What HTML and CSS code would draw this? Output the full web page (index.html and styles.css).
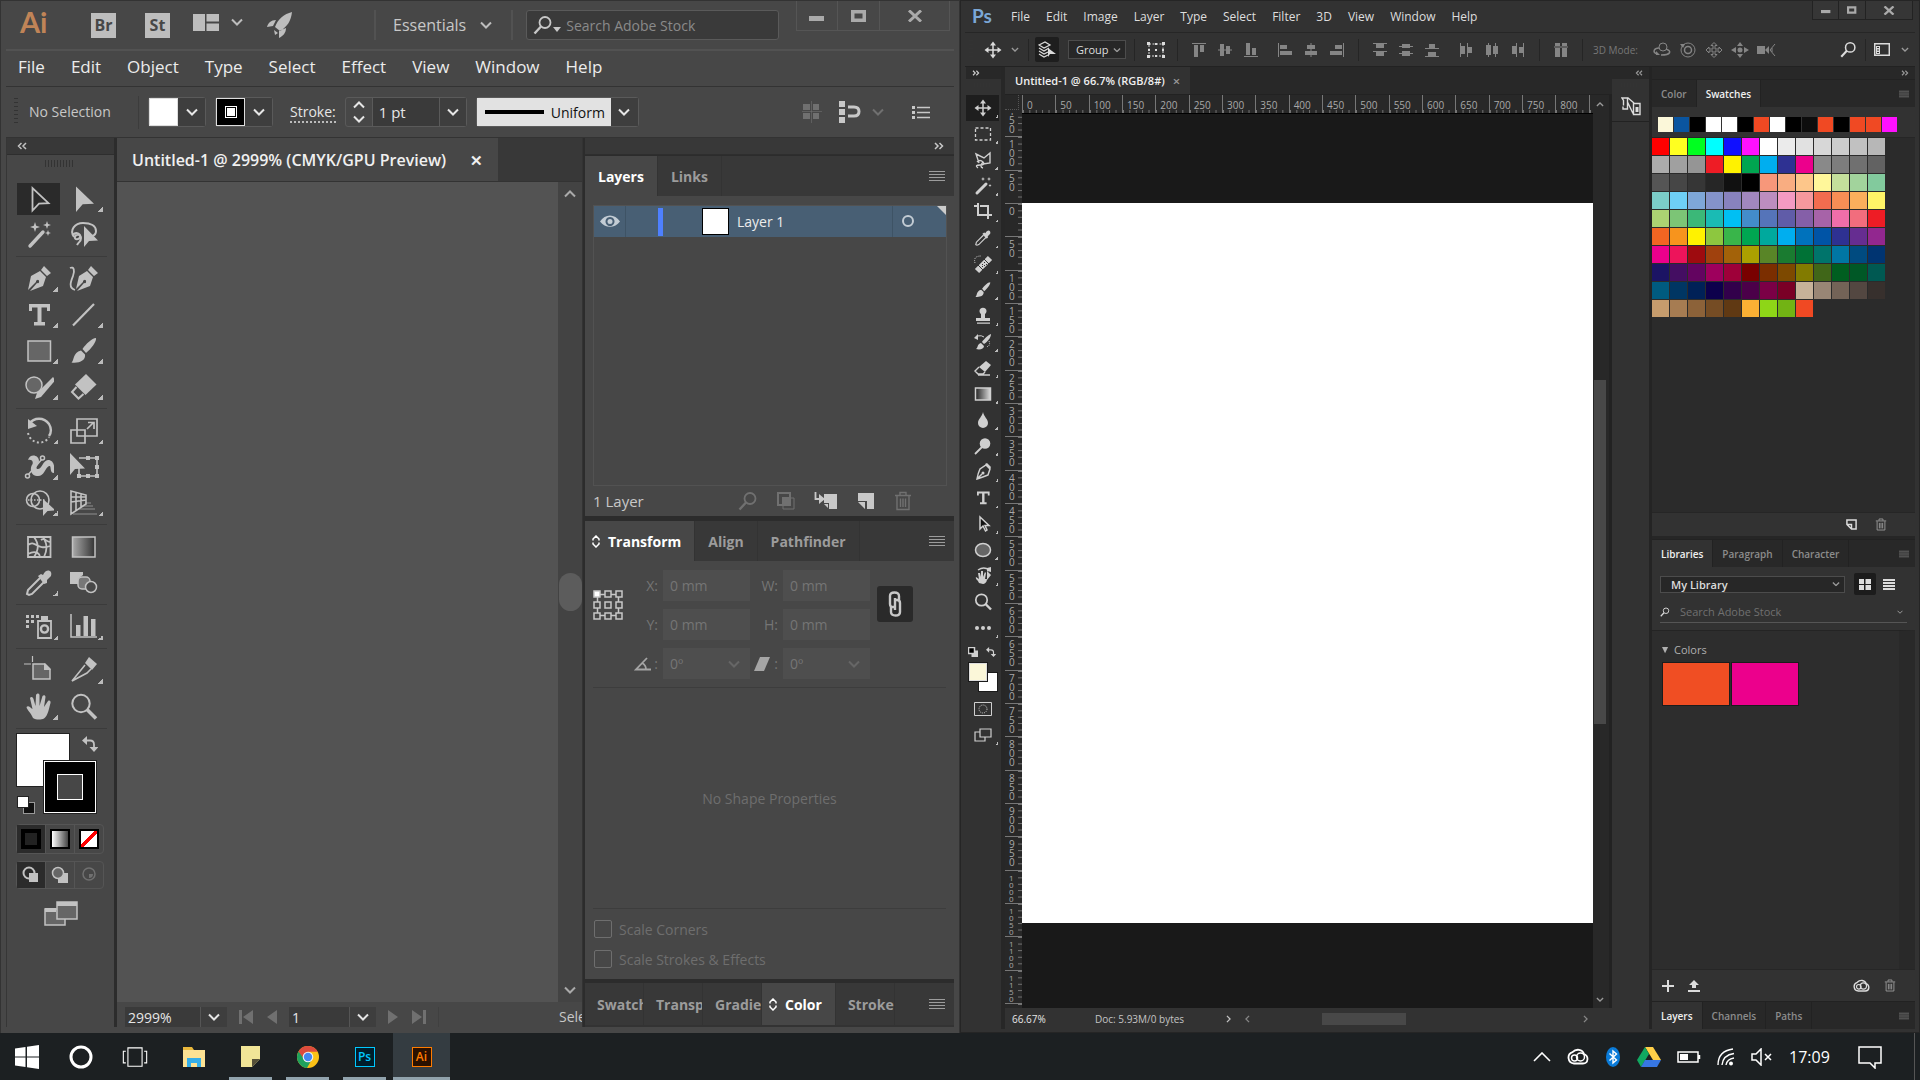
FILE: index.html
```html
<!DOCTYPE html>
<html lang="en">
<head>
<meta charset="utf-8">
<title>Illustrator and Photoshop</title>
<link rel="stylesheet" href="styles.css">
</head>
<body>
<svg class="defs" aria-hidden="true">
  <defs>
    <linearGradient id="fade3"><stop offset="0" stop-color="#222"/><stop offset="1" stop-color="#ddd"/></linearGradient>
    <linearGradient id="fade4"><stop offset="0" stop-color="#aaa"/><stop offset="1" stop-color="#333"/></linearGradient>
  </defs>
  <symbol id="down" viewBox="0 0 12 8"><path class="ln2" d="M1 1.500l5 5 5-5"/></symbol>
  <symbol id="up" viewBox="0 0 12 8"><path class="ln2" d="M1 6.500l5-5 5 5"/></symbol>
  <symbol id="left" viewBox="0 0 8 12"><path class="ln2" d="M6.500 1l-5 5 5 5"/></symbol>
  <symbol id="right" viewBox="0 0 8 12"><path class="ln2" d="M1.500 1l5 5-5 5"/></symbol>
  <symbol id="dleft" viewBox="0 0 10 8"><path class="ln" stroke-width="1.500" d="M4.500 1l-3 3 3 3M9 1L6 4l3 3"/></symbol>
  <symbol id="dright" viewBox="0 0 10 8"><path class="ln" stroke-width="1.500" d="M1 1l3 3-3 3M5.500 1l3 3-3 3"/></symbol>
  <symbol id="menu" viewBox="0 0 16 12"><path class="ln" d="M0 1.500h16M0 4.500h16M0 7.500h16M0 10.500h16"/></symbol>
  <symbol id="updown" viewBox="0 0 8 13"><path class="ln" stroke-width="1.500" d="M1 5.500V4l3-3 3 3v1.500M1 7.500V9l3 3 3-3V7.500"/></symbol>
  <symbol id="loupe" viewBox="0 0 20 20"><circle class="ln" stroke-width="1.800" cx="12" cy="7.500" r="5.500"/><path class="ln" stroke-width="2.400" d="M8 11.500L1.500 18.500"/></symbol>
  <symbol id="win-min" viewBox="0 0 16 12"><path d="M0 6h15v5H0z"/></symbol>
  <symbol id="win-max" viewBox="0 0 16 12"><path fill-rule="evenodd" d="M0 0h15v12H0zM3.500 3.500v5h8v-5z"/></symbol>
  <symbol id="win-x" viewBox="0 0 16 12"><path class="ln" stroke-width="3" d="M2 .5l12 11M14 .5L2 11.500"/></symbol>

  <symbol id="layout" viewBox="0 0 26 17"><path d="M0 0h12v17H0zM13.500 0H26v7.500H13.500zM13.500 9.500H26V17H13.500z"/></symbol>
  <symbol id="rocket" viewBox="0 0 26 26"><path d="M25 0C17 2 11 7 8 15l5 4C20 15 24 9 25 0zM9 8C4 8 1 11 0 15l6-1zM19 16c0 5-3 8-7 10v-7zM7 18l4 3-3 2z"/></symbol>
  <symbol id="pixgrid" viewBox="0 0 20 22"><path d="M1 3h7v6H1zM11 3h6v6h-6zM1 12h7v6H1zM11 12h6v6h-6z"/><path class="ln" stroke-width=".6" d="M9.500 0v22M0 10.500h20"/></symbol>
  <symbol id="magnet" viewBox="0 0 24 22"><path d="M1 0h6v6H1zM1 8h6v6H1zM1 16h6v6H1z"/><path class="ln" stroke-width="3" d="M10 6h6q5 0 5 4.500T16 15h-6"/></symbol>
  <symbol id="list" viewBox="0 0 18 14"><path d="M0 1h3v3H0zM0 6h3v3H0zM0 11h3v3H0z"/><path class="ln" stroke-width="1.500" d="M5 2.500h13M5 7.500h13M5 12.500h13"/></symbol>

  <symbol id="a-select" viewBox="0 0 30 30"><path class="ln" stroke-width="1.800" d="M8.500 4v22.500l6.500-6.800 9.500-.5z"/></symbol>
  <symbol id="a-direct" viewBox="0 0 30 30"><path d="M7 2.500V28l6.700-7.700 11.300-.6z"/></symbol>
  <symbol id="a-wand" viewBox="0 0 30 30"><path class="ln" stroke-width="3.400" stroke-linecap="round" d="M6 26L19 12"/><path d="M11 2l1.200 3.800L16 7l-3.800 1.200L11 12 9.800 8.200 6 7l3.800-1.200zM23 1l1 3 3 1-3 1-1 3-1-3-3-1 3-1zM24 10l.8 2.200L27 13l-2.200.8L24 16l-.8-2.200L21 13l2.200-.8z"/></symbol>
  <symbol id="a-lasso" viewBox="0 0 30 30"><path class="ln" stroke-width="2" d="M5 17c-5-7 1-14 9-14s13 3 13 8q0 4-4 5M4 15c3-4 8-1 7 2s-6 3-5 0 6-3 6 1-2 3-4 7"/><path d="M15 6v21l5-6 9-.5z"/></symbol>
  <symbol id="a-pen" viewBox="0 0 30 30"><path d="M20 2l7 7-4 3-6-6zM16 7l6 6-3 9-13 5 7-8a1.600 1.600 0 1 0-1-1l-8 8 3-14z"/></symbol>
  <symbol id="a-curve" viewBox="0 0 30 30"><path d="M22 2l7 7-4 3-6-6zM18 7l6 6-3 9-13 5 7-8a1.600 1.600 0 1 0-1-1l-7 7 3-13z"/><path class="ln" stroke-width="1.800" d="M1 4c4-2 5 3 3 8s-5 12 2 14"/></symbol>
  <symbol id="a-type" viewBox="0 0 30 30"><path d="M5 4h21v7h-3V7.500h-5.500V22H21v3.500H10V22h3.500V7.500H8V11H5z"/></symbol>
  <symbol id="a-line" viewBox="0 0 30 30"><path class="ln" stroke-width="2.200" d="M4 25.500L25 4"/></symbol>
  <symbol id="a-rect" viewBox="0 0 30 30"><path fill="#666" class="st" d="M4 5h22.500v20H4z"/></symbol>
  <symbol id="a-brush" viewBox="0 0 30 30"><path d="M27 2c1 3-5 11-10 15l-3.500-4C17 8 23 2 27 2zM12 14.500l4 4c1 6-6 9-13.500 8 3-2 1-10 9.500-12z"/></symbol>
  <symbol id="a-shaper" viewBox="0 0 30 30"><circle cx="10" cy="13" r="8" fill="#666" class="st"/><path d="M29 5l2.500 3L17 25l-6 2 2-6z"/></symbol>
  <symbol id="a-eraser" viewBox="0 0 30 30"><path d="M17 2l10.500 10.500L16.500 23 6 12.500z"/><path class="ln" stroke-width="2" d="M7.500 15L3 20l6.500 6.500 5-4.500"/></symbol>
  <symbol id="a-rotate" viewBox="0 0 30 30"><path class="ln" stroke-width="2.400" d="M5 8C10 1 20 1 25 8c3 5 2 9 0 12"/><path class="ln" stroke-width="2" stroke-dasharray="2 2.500" d="M4 17c3 12 17 12 21 4"/><path d="M4 3v10l9-3z"/></symbol>
  <symbol id="a-scale" viewBox="0 0 30 30"><path class="ln" stroke-width="1.700" d="M8 3h20v17H8zM2 14h14v13H2zM18 13l6-6M19 6.500h6V13"/></symbol>
  <symbol id="a-width" viewBox="0 0 30 30"><path d="M4 8c2-7 11-5 11 1 0 4-4 6-2 8 5 1 6-9 11-9 6 0 7 7 6 13-5 0-2-8-5-7-4 2-5 11-12 10S6 16 8 13s0-6-4-5z"/><path class="ln" stroke-width="1.500" d="M3 24L19 6"/><circle class="st" fill="#474747" cx="3.500" cy="24" r="2"/><circle class="st" fill="#474747" cx="18.500" cy="6" r="2"/></symbol>
  <symbol id="a-free" viewBox="0 0 30 30"><path d="M1 1v22l5-6 10-.5z"/><path class="ln" stroke-width="1.600" d="M10 6h18v18H10V14"/><path d="M17 4h4v4h-4zM26 4h4v4h-4zM26 13h4v4h-4zM26 22h4v4h-4zM17 22h4v4h-4zM8 22h4v4H8z"/></symbol>
  <symbol id="a-builder" viewBox="0 0 30 30"><circle class="ln" stroke-width="1.600" cx="16" cy="12" r="9"/><circle class="ln" stroke-width="1.600" cx="9" cy="12" r="6.500"/><path class="ln" stroke-width="1.600" stroke-dasharray="1.500 1.500" d="M4 12h17"/><path d="M19 11v17l4.500-5 8-.5z"/></symbol>
  <symbol id="a-persp" viewBox="0 0 30 30"><path class="ln" stroke-width="1.600" d="M2 3v23l15-10V7zM7 4.500V22M12 6v13M2 14l15-2M2 9l15 0"/><path class="ln" stroke-width="1" opacity=".6" d="M16 15h6M13 18h11M9 21h17M4 26h24"/></symbol>
  <symbol id="a-mesh" viewBox="0 0 30 30"><path class="ln" stroke-width="1.800" d="M4 5h22.500v20H4zM4 13c7-6 9 6 22 1M4 22c9-5 12 1 12 3M10 5c5 7 5 12 0 20M19 5c5 8 4 13 1 20M17 8c4-3 5 2 9 2"/></symbol>
  <symbol id="a-grad" viewBox="0 0 30 30"><path fill="url(#fade4)" class="st" d="M3.500 5H26v20H3.500z"/></symbol>
  <symbol id="a-drop" viewBox="0 0 30 30"><path class="ln" stroke-width="2" d="M16 10L4 22l-1 4 2 1 3-1 12-12"/><path d="M14 8l3-2 2 1c3-7 10-5 8 1l-4 4 0 3-3 1z"/></symbol>
  <symbol id="a-blend" viewBox="0 0 30 30"><path d="M1 4h13v3l-4 3v6H1z"/><rect x="9" y="9" width="12" height="12" rx="4" fill="#777" class="st"/><circle cx="22" cy="19" r="5.500" fill="#474747" class="st"/></symbol>
  <symbol id="a-spray" viewBox="0 0 30 30"><path d="M2 3h3v3H2zM7 3h3v3H7zM12 3h3v3h-3zM2 8h3v3H2zM7 8h3v3H7zM2 13h3v3H2zM17 4h7v5h-7z"/><path class="ln" stroke-width="1.800" d="M14 9h13v17H14z"/><circle class="ln" stroke-width="2.400" cx="20.500" cy="17" r="3.600"/></symbol>
  <symbol id="a-graph" viewBox="0 0 30 30"><path class="ln" stroke-width="1.500" d="M2 2v23h26"/><path d="M7 13h4.500v11H7zM14.500 4H19v20h-4.500zM22 7h4.500v17H22z"/></symbol>
  <symbol id="a-board" viewBox="0 0 30 30"><path class="ln" stroke-width="1.200" d="M0 8h7M8.500 0v6"/><path fill="#666" class="st" d="M9 8h12l5 5v10H9z"/><path d="M20 7v7h7z"/></symbol>
  <symbol id="a-slice" viewBox="0 0 30 30"><path d="M20 1l8 7-5 6-7-7z"/><path class="ln" stroke-width="1.600" d="M16 9L3 25l15-8 4-4"/></symbol>
  <symbol id="a-hand" viewBox="0 0 30 30"><path d="M9 26C7 21 3 18 2.500 15c2-2 4 1 6 2L6 6c1-2 3-1 3.500 1l2 7 .5-11c1-2 3-2 3.500 0v11l3-10c1-1.500 3-1 3 1L20 15l4-6c1.500-1 3 0 2.500 2C25 16 24 24 20 26.500c-3 1.500-8 1.500-11-.5z"/></symbol>
  <symbol id="a-zoom" viewBox="0 0 30 30"><circle class="ln" stroke-width="2" cx="12" cy="11.500" r="8.700"/><path class="ln" stroke-width="3.500" d="M18 17.500l9 9"/></symbol>
  <symbol id="swap" viewBox="0 0 16 16"><path class="ln" stroke-width="1.800" d="M4 4.500h4q4 0 4 4V12"/><path d="M0 4.500L5 0v9zM7.500 11h9L12 16z"/></symbol>
  <symbol id="screens" viewBox="0 0 34 26"><path fill="#666" class="st" d="M1 8h20v16H1z"/><path fill="#666" class="st" d="M13 1h20v17H13z"/><path d="M1 7h11v4H1zM13 1h20v4H13z"/></symbol>
  <symbol id="draw1" viewBox="0 0 18 18"><circle class="ln" stroke-width="2" cx="7" cy="7" r="5.500"/><path d="M7 7h9v9H7z"/></symbol>
  <symbol id="draw2" viewBox="0 0 18 18"><path d="M7 7h10v10H7z"/><circle class="st" fill="#666" cx="7" cy="7" r="5.500"/></symbol>
  <symbol id="draw3" viewBox="0 0 18 18"><circle class="ln" stroke-width="1.500" cx="9" cy="8" r="6"/><path d="M9 8h4q0 4-4 4z"/></symbol>

  <symbol id="eye" viewBox="0 0 20 13"><path fill-rule="evenodd" d="M0 6.500C5-1.500 15-1.500 20 6.500 15 13.500 5 13.500 0 6.500zM10 2a4.500 4.500 0 1 0 .01 0z"/><circle cx="10" cy="6.500" r="2.500"/></symbol>
  <symbol id="clipmask" viewBox="0 0 18 18"><path class="ln" stroke-width="2" d="M1 1h12v12H1z"/><path class="ln" d="M6 6h11v11H6z"/><path d="M5 5h8v8H5z"/></symbol>
  <symbol id="sublayer" viewBox="0 0 24 18"><path fill-rule="evenodd" d="M10 2h13v15h-8V11h-5zM10 12h4v4z"/><path class="ln" stroke-width="1.800" d="M1.500 0v7h5"/><path d="M5 2l6 5-6 5z"/></symbol>
  <symbol id="newlayer" viewBox="0 0 18 18"><path d="M1 1h16v16h-7V9H1zM1 10h7v7z"/></symbol>
  <symbol id="bin" viewBox="0 0 18 20"><path class="ln" stroke-width="1.400" d="M1 4.500h16M6 4V1.500h6V4M3 5v13.500h12V5M6.500 7.500V16M9 7.500V16M11.500 7.500V16"/></symbol>
  <symbol id="refgrid" viewBox="0 0 30 30"><path class="ln" stroke-width="1.500" d="M4.500 4.500h21v21h-21z"/><g class="st" fill="#474747"><path fill="#fff" d="M1 1h6v6H1z"/><path d="M12 1h6v6h-6zM23 1h6v6h-6zM1 12h6v6H1zM12 12h6v6h-6zM23 12h6v6h-6zM1 23h6v6H1zM12 23h6v6h-6zM23 23h6v6h-6z"/></g></symbol>
  <symbol id="chain" viewBox="0 0 14 26"><path class="ln" stroke-width="2.400" d="M6 16H5q-3 0-3-3V5q0-3.500 4.500-3.500T11 5v5M8 9h1q3 0 3 3v9q0 3.500-4.500 3.500T3 21v-5M7 7v12"/></symbol>
  <symbol id="angle" viewBox="0 0 18 14"><path class="ln" stroke-width="1.800" d="M13 1L2 12.500h15M8 6q4 2 4 6.500"/></symbol>
  <symbol id="shear" viewBox="0 0 18 14"><path d="M6 0h10l-6 14H0z"/></symbol>
  <symbol id="first" viewBox="0 0 14 14"><path d="M0 0h3v14H0zM14 0v14L4 7z"/></symbol>
  <symbol id="prev" viewBox="0 0 10 14"><path d="M10 0v14L0 7z"/></symbol>
  <symbol id="next" viewBox="0 0 10 14"><path d="M0 0v14l10-7z"/></symbol>
  <symbol id="last" viewBox="0 0 14 14"><path d="M11 0h3v14h-3zM0 0v14l10-7z"/></symbol>

  <symbol id="p-move" viewBox="0 0 20 20"><path class="ln" stroke-width="1.500" d="M10 3v14M3 10h14"/><path d="M10 1.500L13 5.500H7zM10 18.500L7 14.500h6zM1.500 10L5.500 7v6zM18.500 10L14.500 13V7z"/></symbol>
  <symbol id="p-marq" viewBox="0 0 20 20"><path class="ln" stroke-width="1.300" stroke-dasharray="3 2" d="M2.500 4h15v12h-15z"/></symbol>
  <symbol id="p-lasso" viewBox="0 0 20 20"><path class="ln" stroke-width="1.400" d="M6 13L3 4l8 4 6-5v10l-7 1M4 12q3-3 6 0t-3 3-2 3M10 12q-4 5 0 6"/></symbol>
  <symbol id="p-wand" viewBox="0 0 20 20"><path class="ln" stroke-width="3" stroke-linecap="round" d="M4 17l9-9"/><path d="M10 1l.6 1.400L12 3l-1.400.6L10 5l-.6-1.400L8 3l1.400-.6zM16 1l.6 1.400L18 3l-1.400.6L16 5l-.6-1.400L14 3l1.400-.6zM17 8l.5 1 1 .5-1 .5-.5 1-.5-1-1-.5 1-.5z"/></symbol>
  <symbol id="p-crop" viewBox="0 0 20 20"><path class="ln" stroke-width="2" d="M5 1v12h9M1 4h3M7 4h8v13M16 13h3"/></symbol>
  <symbol id="p-heal" viewBox="0 0 20 20"><path class="ln" stroke-width="6" d="M4 17L17 4"/><path stroke="#333" stroke-width="1" fill="none" d="M5 11l5 5M11 5l5 5"/><path fill="#333" d="M9 10h1v1H9zM11 8h1v1h-1zM11 11h1v1h-1zM9 12h1v1H9zM13 10h1v1h-1z"/><path class="ln" stroke-dasharray="1 1" d="M2 9Q0 2 8 2"/></symbol>
  <symbol id="p-stamp" viewBox="0 0 20 20"><path d="M8 8a3.500 3.500 0 1 1 4 0v4h5v3H3v-3h5zM4 16.500h13v1.200H4z"/></symbol>
  <symbol id="p-hist" viewBox="0 0 20 20"><path d="M18 2c0 4-4 8-7 10L9 10c2-3 6-7 9-8zM8 11l3 3c0 3-4 4-8 3 2-1 1-5 5-6zM1 6l4-4v6z"/><path class="ln" d="M4 4q5-1 7 1"/><path class="ln" stroke-dasharray="1 1" d="M16 9q2 5-3 6"/></symbol>
  <symbol id="p-eraser" viewBox="0 0 20 20"><path d="M13 3l5 4-6 7-6-5z"/><path class="ln" stroke-width="1.400" d="M6 9l-4 4 3 3h5l2-2M5 17h12"/></symbol>
  <symbol id="p-grad" viewBox="0 0 20 20"><path fill="url(#fade3)" class="st" d="M2.500 4h15v12h-15z"/></symbol>
  <symbol id="p-blur" viewBox="0 0 20 20"><path d="M10 2c1 5 5 7 5 11a5 5 0 0 1-10 0c0-4 4-6 5-11z"/></symbol>
  <symbol id="p-dodge" viewBox="0 0 20 20"><circle cx="12" cy="7.500" r="5.300"/><path class="ln" stroke-width="1.800" d="M9 11l-7 7"/></symbol>
  <symbol id="p-pen" viewBox="0 0 20 20"><path class="ln" stroke-width="1.500" d="M13 3l4 4-2 6q-5 2-11 4 1-6 3-10zM4 17l5-5"/><circle cx="10" cy="11" r="1.500"/><path d="M12 2l2-1 4 4-1 2z"/></symbol>
  <symbol id="p-path" viewBox="0 0 20 20"><path fill="#111" class="st" stroke-width="1.200" d="M7 3v12l3-3 2.500 5 1.500-1-2-4.500h4z"/></symbol>
  <symbol id="p-oval" viewBox="0 0 20 20"><ellipse fill="#666" class="st" cx="10" cy="10" rx="7.500" ry="6.500"/></symbol>
  <symbol id="p-rot" viewBox="0 0 20 20"><path class="ln" stroke-width="1.500" d="M5 4q6-4 11 0"/><path d="M14 2l4-1v5l-4-1zM14 5l4 4-4 5zM6 17C5 14 2 13 3 11l3 2-1-6h2l1 4V5h2v6l2-5 1 1-1 6 2 0c0 4-3 5-4 5z"/></symbol>
  <symbol id="p-zoom" viewBox="0 0 20 20"><circle class="ln" stroke-width="1.700" cx="8.500" cy="8" r="5.700"/><path class="ln" stroke-width="2.400" d="M12.500 12l5.500 5.500"/></symbol>
  <symbol id="p-dots" viewBox="0 0 20 20"><circle cx="4" cy="10" r="2"/><circle cx="10" cy="10" r="2"/><circle cx="16" cy="10" r="2"/></symbol>
  <symbol id="p-mask" viewBox="0 0 18 14"><path class="ln" d="M.5 .5h17v13H.5z"/><circle class="ln" stroke-dasharray="1 1" cx="9" cy="7" r="4"/></symbol>
  <symbol id="p-screen" viewBox="0 0 18 14"><path class="ln" stroke-width="1.200" d="M6 1h11v8H6zM6 4H1v9h10V9"/></symbol>
  <symbol id="p-def" viewBox="0 0 10 10"><path d="M3.500 3.500H10V10H3.500z"/><path fill="#000" class="st" stroke-width="1" d="M.5 .5h6v6h-6z"/></symbol>

  <symbol id="o-layers" viewBox="0 0 18 18"><path class="ln" stroke-width="1.200" d="M1 4l6-3 5 3-6 3zM1 7l5 3 5-3M1 10l5 3 4-2M1 13l5 3 4-2"/><path d="M10 7l8 6-6 0-2 3z"/></symbol>
  <symbol id="o-box" viewBox="0 0 18 16"><path class="ln" stroke-dasharray="2 1.500" d="M2 2h14v12H2z"/><path d="M0 0h3v3H0zM8 1h2v2H8zM15 0h3v3h-3zM0 13h3v3H0zM8 13h2v2H8zM15 13h3v3h-3zM1 7h2v2H1zM15 7h2v2h-2zM8 7h2v2H8z"/></symbol>
  <symbol id="al-t" viewBox="0 0 14 14"><path d="M0 0h14v1H0zM2 2h4v12H2zM8 2h4v7H8z"/></symbol>
  <symbol id="al-m" viewBox="0 0 14 14"><path d="M0 6.500h14v1H0zM2 1h4v12H2zM8 3h4v8H8z"/></symbol>
  <symbol id="al-b" viewBox="0 0 14 14"><path d="M0 13h14v1H0zM2 0h4v12H2zM8 5h4v7H8z"/></symbol>
  <symbol id="al-l" viewBox="0 0 14 14"><path d="M0 0h1v14H0zM2 2h7v4H2zM2 8h12v4H2z"/></symbol>
  <symbol id="al-c" viewBox="0 0 14 14"><path d="M6.500 0h1v14h-1zM3 2h8v4H3zM1 8h12v4H1z"/></symbol>
  <symbol id="al-r" viewBox="0 0 14 14"><path d="M13 0h1v14h-1zM5 2h7v4H5zM0 8h12v4H0z"/></symbol>
  <symbol id="di-t" viewBox="0 0 14 14"><path d="M0 0h14v1H0zM3 1h8v4H3zM0 8h14v1H0zM3 9h8v4H3z"/></symbol>
  <symbol id="di-m" viewBox="0 0 14 14"><path d="M0 3h14v1H0zM3 1h8v4H3zM0 10h14v1H0zM3 8h8v5H3z"/></symbol>
  <symbol id="di-b" viewBox="0 0 14 14"><path d="M0 5h14v1H0zM4 1h6v4H4zM0 13h14v1H0zM3 9h8v4H3z"/></symbol>
  <symbol id="di-l" viewBox="0 0 14 14"><path d="M1 0h1v14H1zM2 3h4v8H2zM8 0h1v14H8zM9 4h4v6H9z"/></symbol>
  <symbol id="di-c" viewBox="0 0 14 14"><path d="M3 0h1v14H3zM1 2h5v10H1zM10 0h1v14h-1zM8 3h5v8H8z"/></symbol>
  <symbol id="di-r" viewBox="0 0 14 14"><path d="M5 0h1v14H5zM1 3h4v8H1zM12 0h1v14h-1zM8 4h4v6H8z"/></symbol>
  <symbol id="di-x" viewBox="0 0 14 14"><path d="M1 0h5v3H1zM1 5h5v9H1zM8 0h5v3H8zM8 5h5v9H8zM0 3.500h14v1H0z"/></symbol>
  <symbol id="m1" viewBox="0 0 18 16"><circle class="ln" cx="10" cy="5" r="4"/><path class="ln" stroke-width="1.500" d="M6 6C1 6-1 10 4 12M13 7c6 2 5 6-5 6"/><path d="M3 9l4 4H3z"/></symbol>
  <symbol id="m2" viewBox="0 0 18 16"><circle class="ln" cx="9" cy="8" r="7"/><circle class="ln" stroke-width="1.500" cx="9" cy="8" r="3.500"/><path d="M1 2h5L4 6z"/></symbol>
  <symbol id="m3" viewBox="0 0 18 16"><path class="ln" d="M9 .5l3 3h-2v3.500h4V5l3 3-3 3V9h-4v3.500h2l-3 3-3-3h2V9H4v2L1 8l3-3v2h4V3.500H6z"/></symbol>
  <symbol id="m4" viewBox="0 0 18 16"><circle cx="9" cy="8" r="2.500"/><path d="M9 0l3 4H6zM9 16l-3-4h6zM0 8l5-3v6zM18 8l-5 3V5z"/></symbol>
  <symbol id="m5" viewBox="0 0 18 16"><path d="M0 4h8v8H0zM8 8l4-4v8z"/><path class="ln" d="M18 2l-5 6 5 6M15 6v4"/></symbol>
  <symbol id="workspace" viewBox="0 0 16 13"><path class="ln" stroke-width="1.500" d="M.7 .7h14.600v11.600H.7z"/><path fill-rule="evenodd" d="M2 3h4v8H2zM3 4v1h2V4zM3 6.500v1h2v-1zM3 9v1h2V9z"/></symbol>
  <symbol id="book" viewBox="0 0 20 20"><path class="ln" stroke-width="1.400" d="M2 10.500V13h4.500V2H1l1.500 2.500v5M6.500 1.500L13 7M6.500 6L12 17.500M12.500 7.500h6.500v11h-6.500z"/><path d="M14.500 11h3v5h-3z"/></symbol>
  <symbol id="newsw" viewBox="0 0 12 12"><path class="ln" stroke-width="1.600" d="M1 6V1h10v10H6zM1 6h5v5"/></symbol>
  <symbol id="gridview" viewBox="0 0 12 11"><path d="M0 0h5v5H0zM6.500 0H12v5H6.500zM0 6h5v5H0zM6.500 6H12v5H6.500z"/></symbol>
  <symbol id="rows" viewBox="0 0 12 11"><path d="M0 0h12v2H0zM0 3h12v2H0zM0 6h12v2H0zM0 9h12v2H0z"/></symbol>
  <symbol id="tri" viewBox="0 0 8 8"><path d="M0 0h7L3.500 7z"/></symbol>
  <symbol id="tri2" viewBox="0 0 8 5"><path d="M0 0h8L4 5z"/></symbol>
  <symbol id="plus" viewBox="0 0 12 12"><path class="ln" stroke-width="2" d="M6 0v12M0 6h12"/></symbol>
  <symbol id="upload" viewBox="0 0 12 12"><path d="M6 0l5 5H8v3H4V5H1zM0 10h12v2H0z"/></symbol>
  <symbol id="cc" viewBox="0 0 22 18"><path class="ln" stroke-width="1.800" d="M7 15.500A5.800 5.800 0 0 1 5.500 4.200C9 .5 15.500 1 17 6c5 2 4.500 9.500-1 9.500z"/><circle class="ln" stroke-width="1.500" cx="7.500" cy="10" r="3"/><circle class="ln" stroke-width="1.500" cx="13.500" cy="9" r="4"/></symbol>

  <symbol id="t-up" viewBox="0 0 18 10"><path class="ln" stroke-width="1.600" d="M1 9l8-8 8 8"/></symbol>
  <symbol id="t-start" viewBox="0 0 24 24"><path d="M0 3.500L10.500 2v9.500H0zM12 1.800L24 0v11.500H12zM0 12.500h10.500V22L0 20.500zM12 12.500h12V24l-12-1.800z"/></symbol>
  <symbol id="t-ring" viewBox="0 0 24 24"><circle class="ln" stroke-width="3" cx="12" cy="12" r="10"/></symbol>
  <symbol id="t-task" viewBox="0 0 30 24"><path class="ln" stroke-width="1.300" d="M6.500 1h17v22h-17zM4 5H1v14h3M26 5h3v14h-3"/></symbol>
  <symbol id="t-folder" viewBox="0 0 24 22"><path fill="#e9b83c" d="M1 1h9l2 3v4H1z"/><path fill="#fde293" d="M1 4h22v17H1z"/><path fill="#35aee8" d="M5 12h14v9h-4v-4H9v4H5z"/></symbol>
  <symbol id="t-note" viewBox="0 0 20 22"><path fill="#f1e597" d="M0 0h19v13l-8 8H0z"/><path fill="#555038" d="M11 13h8l-8 8z"/></symbol>
  <symbol id="t-chrome" viewBox="0 0 24 24"><circle cx="12" cy="12" r="11" fill="#fbc116"/><path fill="#1ea15d" d="M12 12L2.500 6.500A11 11 0 0 0 11 23l5-9z"/><path fill="#dd4b3e" d="M12 6.800h9.700A11 11 0 0 0 2.500 6.500L8 14z"/><circle cx="12" cy="12" r="5.300" fill="#f1f1f1"/><circle cx="12" cy="12" r="4.200" fill="#4587f3"/></symbol>
  <symbol id="t-bt" viewBox="0 0 16 20"><ellipse cx="8" cy="10" rx="7" ry="10" fill="#0a7bd8"/><path stroke="#fff" stroke-width="1.400" fill="none" d="M4.500 6.500l7 6.500L8 16V4l3.500 3-7 6.500"/></symbol>
  <symbol id="t-drive" viewBox="0 0 24 20"><path fill="#ffcf48" d="M8 0h8l8 13h-8z"/><path fill="#11a861" d="M8 0l4 7-8 13-4-7z"/><path fill="#3777e3" d="M8 13h16l-4 7H4z"/></symbol>
  <symbol id="t-batt" viewBox="0 0 24 14"><path class="ln" stroke-width="1.500" d="M1 2h20v10H1zM22.500 5v4"/><path d="M3 4h8v6H3z"/></symbol>
  <symbol id="t-wifi" viewBox="0 0 18 18"><path class="ln" stroke-width="1.400" d="M1 17Q1 3 16 1M5 17Q6 7 17 5.500M9 17q1-6 8-7"/><circle cx="14" cy="15.500" r="2"/></symbol>
  <symbol id="t-vol" viewBox="0 0 22 18"><path class="ln" stroke-width="1.500" d="M1 6h4l5-5v16l-5-5H1zM14 6l6 6M20 6l-6 6"/></symbol>
  <symbol id="t-msg" viewBox="0 0 24 24"><path class="ln" stroke-width="1.500" d="M1 2h22v16h-6v5l-5-5H1z"/></symbol>
</svg>

<div class="desktop">
<section class="app ai" aria-label="Illustrator">
  <header class="ai-top">
    <span class="logo">Ai</span>
    <button class="chip">Br</button><button class="chip">St</button>
    <button class="arrange" aria-label="Arrange documents"><svg width="26" height="17"><use href="#layout"/></svg><svg class="hi" width="12" height="8"><use href="#down"/></svg></button>
    <button aria-label="Performance"><svg width="26" height="26"><use href="#rocket"/></svg></button>
    <button class="essentials">Essentials <svg width="12" height="8"><use href="#down"/></svg></button>
    <label class="ai-search"><svg width="20" height="20"><use href="#loupe"/></svg><svg width="8" height="5"><use href="#tri2"/></svg><input placeholder="Search Adobe Stock" aria-label="Search Adobe Stock"></label>
    <div class="winbtns"><button aria-label="Minimize"><svg width="16" height="12"><use href="#win-min"/></svg></button><button aria-label="Maximize"><svg width="16" height="12"><use href="#win-max"/></svg></button><button aria-label="Close"><svg width="16" height="12"><use href="#win-x"/></svg></button></div>
  </header>
  <nav class="ai-menu"><button>File</button><button>Edit</button><button>Object</button><button>Type</button><button>Select</button><button>Effect</button><button>View</button><button>Window</button><button>Help</button></nav>
  <div class="ai-control">
    <span class="vgrip"></span><span class="nosel">No Selection</span>
    <div class="combo"><span class="sw white"></span><button aria-label="Fill"><svg width="12" height="8"><use href="#down"/></svg></button></div>
    <div class="combo"><span class="sw black"></span><button aria-label="Stroke colour"><svg width="12" height="8"><use href="#down"/></svg></button></div>
    <label class="strokelabel" for="stroke">Stroke:</label>
    <div class="combo weight"><span class="spin"><svg width="12" height="8"><use href="#up"/></svg><svg width="12" height="8"><use href="#down"/></svg></span><input id="stroke" value="1 pt"><button aria-label="Stroke weight"><svg width="12" height="8"><use href="#down"/></svg></button></div>
    <div class="combo profile"><span class="uniform"><i></i>Uniform</span><button aria-label="Profile"><svg width="12" height="8"><use href="#down"/></svg></button></div>
    <div class="ctl-right"><svg class="dim" width="20" height="22"><use href="#pixgrid"/></svg><svg width="24" height="22"><use href="#magnet"/></svg><svg class="dim" width="12" height="8"><use href="#down"/></svg><svg class="listicon" width="18" height="14"><use href="#list"/></svg></div>
  </div>
  <div class="ai-main">
    <aside class="ai-tools">
      <div class="strip"><svg width="10" height="8"><use href="#dleft"/></svg></div>
      <div class="grip"></div>
      <div class="tg"><button class="on" aria-label="Selection"><svg><use href="#a-select"/></svg></button><button class="more" aria-label="Direct selection"><svg><use href="#a-direct"/></svg></button><button aria-label="Magic wand"><svg><use href="#a-wand"/></svg></button><button aria-label="Lasso"><svg><use href="#a-lasso"/></svg></button></div>
      <div class="tg"><button class="more" aria-label="Pen"><svg><use href="#a-pen"/></svg></button><button aria-label="Curvature"><svg><use href="#a-curve"/></svg></button><button class="more" aria-label="Type"><svg><use href="#a-type"/></svg></button><button class="more" aria-label="Line"><svg><use href="#a-line"/></svg></button><button class="more" aria-label="Rectangle"><svg><use href="#a-rect"/></svg></button><button class="more" aria-label="Paintbrush"><svg><use href="#a-brush"/></svg></button><button class="more" aria-label="Shaper"><svg><use href="#a-shaper"/></svg></button><button class="more" aria-label="Eraser"><svg><use href="#a-eraser"/></svg></button></div>
      <div class="tg"><button class="more" aria-label="Rotate"><svg><use href="#a-rotate"/></svg></button><button class="more" aria-label="Scale"><svg><use href="#a-scale"/></svg></button><button class="more" aria-label="Width"><svg><use href="#a-width"/></svg></button><button aria-label="Free transform"><svg><use href="#a-free"/></svg></button><button class="more" aria-label="Shape builder"><svg><use href="#a-builder"/></svg></button><button class="more" aria-label="Perspective grid"><svg><use href="#a-persp"/></svg></button></div>
      <div class="tg"><button aria-label="Mesh"><svg><use href="#a-mesh"/></svg></button><button aria-label="Gradient"><svg><use href="#a-grad"/></svg></button><button class="more" aria-label="Eyedropper"><svg><use href="#a-drop"/></svg></button><button aria-label="Blend"><svg><use href="#a-blend"/></svg></button></div>
      <div class="tg"><button class="more" aria-label="Symbol sprayer"><svg><use href="#a-spray"/></svg></button><button class="more" aria-label="Graph"><svg><use href="#a-graph"/></svg></button></div>
      <div class="tg"><button aria-label="Artboard"><svg><use href="#a-board"/></svg></button><button class="more" aria-label="Slice"><svg><use href="#a-slice"/></svg></button><button class="more" aria-label="Hand"><svg><use href="#a-hand"/></svg></button><button aria-label="Zoom"><svg><use href="#a-zoom"/></svg></button></div>
      <div class="fillstroke"><span class="fill"></span><span class="stroke"><i></i></span><svg class="fs-swap" width="16" height="16"><use href="#swap"/></svg><span class="fs-def"></span></div>
      <div class="modes"><button class="on" aria-label="Colour"><span class="m-solid"></span></button><button aria-label="Gradient"><span class="m-grad"></span></button><button aria-label="None"><span class="m-none"></span></button></div>
      <div class="modes draw"><button class="on" aria-label="Draw normal"><svg width="18" height="18"><use href="#draw1"/></svg></button><button aria-label="Draw behind"><svg width="18" height="18"><use href="#draw2"/></svg></button><button class="dim" aria-label="Draw inside"><svg width="18" height="18"><use href="#draw3"/></svg></button></div>
      <button class="screenbtn" aria-label="Screen mode"><svg width="34" height="26"><use href="#screens"/></svg></button>
    </aside>
    <main class="ai-doc">
      <div class="doctabs"><div class="doctab">Untitled-1 @ 2999% (CMYK/GPU Preview)<button aria-label="Close document">✕</button></div></div>
      <div class="ai-view"><div class="ai-canvas"></div><div class="ai-scroll"><svg width="12" height="8"><use href="#up"/></svg><span></span><svg width="12" height="8"><use href="#down"/></svg></div></div>
      <div class="ai-status"><input class="zoom" aria-label="Zoom" value="2999%"><button class="dd" aria-label="Zoom level"><svg width="12" height="8"><use href="#down"/></svg></button><span class="nav dim"><svg width="14" height="14"><use href="#first"/></svg><svg width="10" height="14"><use href="#prev"/></svg></span><input class="page" aria-label="Artboard" value="1"><button class="dd" aria-label="Artboard list"><svg width="12" height="8"><use href="#down"/></svg></button><span class="nav dim"><svg width="10" height="14"><use href="#next"/></svg><svg width="14" height="14"><use href="#last"/></svg></span><span class="seltext">Selection</span></div>
    </main>
    <aside class="ai-panels">
      <div class="strip right"><svg width="10" height="8"><use href="#dright"/></svg></div>
      <section class="layers">
        <div class="tabs"><button class="on">Layers</button><button>Links</button><svg class="pm" width="16" height="12"><use href="#menu"/></svg></div>
        <div class="layerlist"><div class="layer"><span class="c-eye"><svg width="20" height="13"><use href="#eye"/></svg></span><span class="c-lock"></span><span class="c-bar"></span><span class="thumb"></span><span class="lname">Layer 1</span><span class="c-ring"><i></i></span></div></div>
        <div class="layerfoot"><span>1 Layer</span><svg class="dim" width="20" height="20"><use href="#loupe"/></svg><svg class="dim" width="18" height="18"><use href="#clipmask"/></svg><svg width="24" height="18"><use href="#sublayer"/></svg><svg width="18" height="18"><use href="#newlayer"/></svg><svg class="dim" width="18" height="20"><use href="#bin"/></svg></div>
      </section>
      <section class="transform">
        <div class="tabs"><button class="on ud"><svg width="8" height="13"><use href="#updown"/></svg>Transform</button><button>Align</button><button>Pathfinder</button><svg class="pm" width="16" height="12"><use href="#menu"/></svg></div>
        <div class="tf">
          <svg class="ref" width="30" height="30"><use href="#refgrid"/></svg>
          <div class="fields">
            <label for="fx">X:</label><input id="fx" value="0 mm" disabled><label for="fw">W:</label><input id="fw" value="0 mm" disabled>
            <label for="fy">Y:</label><input id="fy" value="0 mm" disabled><label for="fh">H:</label><input id="fh" value="0 mm" disabled>
            <label for="fa"><svg width="18" height="14"><use href="#angle"/></svg>:</label><span class="sel"><select id="fa" disabled><option>0º</option></select><svg width="12" height="8"><use href="#down"/></svg></span><label for="fs"><svg width="18" height="14"><use href="#shear"/></svg>:</label><span class="sel"><select id="fs" disabled><option>0º</option></select><svg width="12" height="8"><use href="#down"/></svg></span>
          </div>
          <button class="link" aria-label="Constrain"><svg width="14" height="26"><use href="#chain"/></svg></button>
        </div>
        <div class="shapeprops">No Shape Properties</div>
        <div class="checks"><label><input type="checkbox" disabled>Scale Corners</label><label><input type="checkbox" disabled>Scale Strokes &amp; Effects</label></div>
      </section>
      <div class="tabs bottom"><button class="cut">Swatches</button><button class="cut">Transparency</button><button class="cut">Gradient</button><button class="on ud"><svg width="8" height="13"><use href="#updown"/></svg>Color</button><button class="cut">Stroke</button><svg class="pm" width="16" height="12"><use href="#menu"/></svg></div>
    </aside>
  </div>
</section>

<section class="app ps" aria-label="Photoshop">
  <header class="ps-top"><span class="logo">Ps</span>
    <nav class="ps-menu"><button>File</button><button>Edit</button><button>Image</button><button>Layer</button><button>Type</button><button>Select</button><button>Filter</button><button>3D</button><button>View</button><button>Window</button><button>Help</button></nav>
    <div class="winbtns"><button aria-label="Minimize"><svg width="10" height="8"><use href="#win-min"/></svg></button><button aria-label="Maximize"><svg width="10" height="8"><use href="#win-max"/></svg></button><button aria-label="Close"><svg width="12" height="9"><use href="#win-x"/></svg></button></div>
  </header>
  <div class="ps-options">
    <span class="vgrip"></span><svg class="br" width="20" height="20"><use href="#p-move"/></svg><svg width="8" height="5"><use href="#down"/></svg><hr>
    <button class="autosel" aria-label="Auto-select"><svg width="18" height="18"><use href="#o-layers"/></svg></button>
    <span class="sel group"><select aria-label="Auto-select target"><option>Group</option></select><svg width="8" height="5"><use href="#down"/></svg></span><hr>
    <svg class="br box" width="18" height="16"><use href="#o-box"/></svg><hr>
    <div class="icons"><svg><use href="#al-t"/></svg><svg><use href="#al-m"/></svg><svg><use href="#al-b"/></svg></div><div class="icons"><svg><use href="#al-l"/></svg><svg><use href="#al-c"/></svg><svg><use href="#al-r"/></svg></div><hr>
    <div class="icons"><svg><use href="#di-t"/></svg><svg><use href="#di-m"/></svg><svg><use href="#di-b"/></svg></div><div class="icons"><svg><use href="#di-l"/></svg><svg><use href="#di-c"/></svg><svg><use href="#di-r"/></svg></div><hr>
    <div class="icons"><svg><use href="#di-x"/></svg></div><hr>
    <span class="mode">3D Mode:</span>
    <div class="icons three"><svg><use href="#m1"/></svg><svg><use href="#m2"/></svg><svg><use href="#m3"/></svg><svg><use href="#m4"/></svg><svg><use href="#m5"/></svg></div>
    <div class="opt-right"><svg class="br" width="17" height="17"><use href="#loupe"/></svg><hr><svg class="br" width="16" height="13"><use href="#workspace"/></svg><svg width="8" height="5"><use href="#down"/></svg></div>
  </div>
  <div class="ps-main">
    <aside class="ps-tools">
      <div class="strip"><svg width="8" height="6"><use href="#dright"/></svg></div>
      <div class="grip"></div>
      <button class="on more" aria-label="Move"><svg><use href="#p-move"/></svg></button><button class="more" aria-label="Marquee"><svg><use href="#p-marq"/></svg></button><button class="more" aria-label="Lasso"><svg><use href="#p-lasso"/></svg></button><button class="more" aria-label="Wand"><svg><use href="#p-wand"/></svg></button><button class="more" aria-label="Crop"><svg><use href="#p-crop"/></svg></button><button class="more sm" aria-label="Eyedropper"><svg><use href="#a-drop"/></svg></button><button class="more" aria-label="Healing"><svg><use href="#p-heal"/></svg></button><button class="more sm" aria-label="Brush"><svg><use href="#a-brush"/></svg></button><button class="more" aria-label="Stamp"><svg><use href="#p-stamp"/></svg></button><button class="more" aria-label="History brush"><svg><use href="#p-hist"/></svg></button><button class="more" aria-label="Eraser"><svg><use href="#p-eraser"/></svg></button><button class="more" aria-label="Gradient"><svg><use href="#p-grad"/></svg></button><button class="more" aria-label="Blur"><svg><use href="#p-blur"/></svg></button><button class="more" aria-label="Dodge"><svg><use href="#p-dodge"/></svg></button><button class="more" aria-label="Pen"><svg><use href="#p-pen"/></svg></button><button class="more sm" aria-label="Type"><svg><use href="#a-type"/></svg></button><button class="more" aria-label="Path selection"><svg><use href="#p-path"/></svg></button><button class="more" aria-label="Ellipse"><svg><use href="#p-oval"/></svg></button><button class="more" aria-label="Rotate view"><svg><use href="#p-rot"/></svg></button><button aria-label="Zoom"><svg><use href="#p-zoom"/></svg></button><button class="more" aria-label="Edit toolbar"><svg><use href="#p-dots"/></svg></button>
      <div class="ps-defs"><svg width="10" height="10"><use href="#p-def"/></svg><svg width="10" height="10"><use href="#swap"/></svg></div>
      <div class="ps-fb"><span class="bg"></span><span class="fg"></span></div>
      <button class="qm" aria-label="Quick mask"><svg><use href="#p-mask"/></svg></button><button class="qm more" aria-label="Screen mode"><svg><use href="#p-screen"/></svg></button>
    </aside>
    <main class="ps-doc">
      <div class="doctabs"><div class="doctab">Untitled-1 @ 66.7% (RGB/8#)<button aria-label="Close document">×</button></div></div>
      <div class="ps-view">
        <div class="corner"></div>
        <div class="hr"><div id="hruler"></div></div>
        <div class="vr"><div id="vruler"></div></div>
        <div class="ps-canvas"><div class="artboard"></div></div>
        <div class="ps-scroll"><svg width="8" height="5"><use href="#up"/></svg><span></span><svg width="8" height="5"><use href="#down"/></svg></div>
      </div>
      <div class="ps-status"><span class="pz">66.67%</span><span class="pd">Doc: 5.93M/0 bytes</span><svg width="5" height="8"><use href="#right"/></svg><div class="hscroll"><svg width="5" height="8"><use href="#left"/></svg><span></span><svg width="5" height="8"><use href="#right"/></svg></div></div>
    </main>
    <aside class="ps-icons"><div class="strip right"><svg width="8" height="6"><use href="#dleft"/></svg></div><div class="grip"></div><button aria-label="Adjust"><svg width="20" height="20"><use href="#book"/></svg></button></aside>
    <aside class="ps-panels">
      <div class="strip right"><svg width="8" height="6"><use href="#dright"/></svg></div>
      <section class="swpanel">
        <div class="tabs"><button>Color</button><button class="on">Swatches</button><svg class="pm" width="10" height="8"><use href="#menu"/></svg></div>
        <div class="recent" id="recent"></div>
        <div class="swarea"><div class="swatches" id="swatches"></div></div>
        <div class="foot"><svg class="br" width="11" height="11"><use href="#newsw"/></svg><svg width="12" height="13"><use href="#bin"/></svg></div>
      </section>
      <section class="libs">
        <div class="tabs"><button class="on">Libraries</button><button>Paragraph</button><button>Character</button><svg class="pm" width="10" height="8"><use href="#menu"/></svg></div>
        <div class="librow"><span class="sel"><select aria-label="Library"><option>My Library</option></select><svg width="8" height="5"><use href="#down"/></svg></span><button class="on" aria-label="Grid view"><svg width="12" height="11"><use href="#gridview"/></svg></button><button aria-label="List view"><svg width="12" height="11"><use href="#rows"/></svg></button></div>
        <label class="libsearch"><svg class="br" width="10" height="10"><use href="#loupe"/></svg><input placeholder="Search Adobe Stock" aria-label="Search library"><svg width="6" height="4"><use href="#down"/></svg></label>
        <div class="libarea"><h3><svg width="7" height="7"><use href="#tri"/></svg>Colors</h3><div class="libcolors"><span class="orange"></span><span class="pink"></span></div></div>
        <div class="foot lib"><svg class="br" width="12" height="12"><use href="#plus"/></svg><svg class="br" width="12" height="12"><use href="#upload"/></svg><svg class="br cc" width="17" height="14"><use href="#cc"/></svg><svg width="12" height="13"><use href="#bin"/></svg></div>
      </section>
      <div class="tabs last"><button class="on">Layers</button><button>Channels</button><button>Paths</button><svg class="pm" width="10" height="8"><use href="#menu"/></svg></div>
    </aside>
  </div>
</section>
</div>

<footer class="taskbar">
  <button class="sys" aria-label="Start"><svg width="24" height="24"><use href="#t-start"/></svg></button><button class="sys" aria-label="Cortana"><svg width="24" height="24"><use href="#t-ring"/></svg></button><button class="sys" aria-label="Task view"><svg width="30" height="20"><use href="#t-task"/></svg></button>
  <button class="task" aria-label="File Explorer"><svg width="24" height="22"><use href="#t-folder"/></svg></button><button class="task run" aria-label="Sticky Notes"><svg width="20" height="22"><use href="#t-note"/></svg></button><button class="task run" aria-label="Chrome"><svg width="24" height="24"><use href="#t-chrome"/></svg></button><button class="task run"><span class="tile blue">Ps</span></button><button class="task active"><span class="tile org">Ai</span></button>
  <div class="tray"><svg width="18" height="10"><use href="#t-up"/></svg><svg width="22" height="18"><use href="#cc"/></svg><svg width="16" height="20"><use href="#t-bt"/></svg><svg width="24" height="20"><use href="#t-drive"/></svg><svg width="24" height="14"><use href="#t-batt"/></svg><svg width="18" height="18"><use href="#t-wifi"/></svg><svg width="22" height="18"><use href="#t-vol"/></svg><time>17:09</time><svg width="24" height="24"><use href="#t-msg"/></svg><i></i></div>
</footer>
<script src="app.js"></script>
</body>
</html>
```

FILE: styles.css
```css
* { box-sizing: border-box; }
body { margin: 0; height: 100vh; display: flex; flex-direction: column; overflow: hidden; background: #1c2022; font-family: "Open Sans", "Noto Sans", sans-serif; }
button, input, select { font: inherit; color: inherit; background: none; border: 0; padding: 0; margin: 0; min-width: 0; }
button { display: flex; align-items: center; justify-content: center; white-space: nowrap; }
svg { display: block; flex: none; fill: currentColor; }
.defs { position: absolute; width: 0; height: 0; }
.ln { fill: none; stroke: currentColor; }
.ln2 { fill: none; stroke: currentColor; stroke-width: 2; }
.st { stroke: currentColor; stroke-width: 1.5; }
select { appearance: none; opacity: 1; }
input::placeholder { color: #8a8a8a; opacity: 1; }

.desktop { flex: 1; min-height: 0; display: grid; grid-template-columns: 1fr 1fr; grid-template-rows: minmax(0, 1fr); }
.app { display: flex; flex-direction: column; min-width: 0; min-height: 0; }
.sel { position: relative; display: flex; }
.sel select { width: 100%; }
.sel svg { position: absolute; right: 10px; top: 50%; translate: 0 -50%; pointer-events: none; }

/* Illustrator */
.ai { background: #474747; color: #c8c8c8; font-size: 14px; border: 1px solid #333; border-bottom: 0; padding: 0 5px 6px; }
.ai-top { display: flex; align-items: center; height: 50px; padding-left: 14px; border-bottom: 2px solid #525252; flex: none; }
.ai .logo { color: #c08457; font-size: 29px; font-weight: 700; line-height: 30px; width: 71px; padding-bottom: 6px; font-family: Lato, sans-serif; }
.chip { width: 25px; height: 25px; margin-right: 29px; background: #bdbdbd; color: #474747; font-weight: 700; font-size: 16px; }
.arrange { gap: 12px; margin: 0 24px 6px -6px; }
.ai-top > button > svg { color: #bdbdbd; }
.essentials { margin-left: 81px; height: 30px; padding: 0 19px 0 17px; border: solid #525252; border-width: 0 2px; gap: 14px; font-size: 16px; }
.ai-search { display: flex; align-items: center; margin-left: 13px; width: 253px; height: 30px; padding: 0 6px; background: #3a3a3a; border: 1px solid #5a5a5a; border-radius: 3px; }
.ai-search svg + svg { margin-top: 8px; margin-right: 5px; }
.ai-search input { flex: 1; font-size: 14px; }
.winbtns { display: flex; align-self: flex-start; margin-left: auto; color: #aaa; }
.ai .winbtns { margin-right: 4px; }
.winbtns button { border: solid #555; border-width: 0 1px 1px 0; }
.winbtns button:first-child { border-left-width: 1px; }
.ai .winbtns button { width: 42px; height: 30px; }
.ai .winbtns button:last-child { width: 70px; }
.ai-menu { display: flex; align-items: center; gap: 26px; height: 36px; padding: 0 0 4px 12px; flex: none; font-size: 17px; color: #ececec; border-bottom: 1px solid #333; }
.ai-control { display: flex; align-items: center; height: 51px; padding: 0 24px 0 8px; flex: none; border-bottom: 1px solid #333; }
.vgrip { width: 4px; height: 28px; background: repeating-linear-gradient(#333 0 1px, transparent 1px 4px); }
.nosel { width: 121px; padding: 6px 0 8px 11px; border-right: 1px solid #3c3c3c; }
.combo { display: flex; height: 30px; margin-left: 9px; border: 1px solid #5a5a5a; border-radius: 3px; color: #e6e6e6; }
.combo button { width: 27px; background: #3e3e3e; }
.sw { width: 29px; border: 1px solid #ddd; }
.sw.white { background: #fff; }
.sw.black { background: radial-gradient(#fff, #fff) center / 8px 8px no-repeat, radial-gradient(#000, #000) center / 10px 10px no-repeat, radial-gradient(#fff, #fff) center / 12px 12px no-repeat, #000; }
.strokelabel { margin-left: 17px; border-bottom: 2px dotted #bbb; line-height: 19px; color: #e6e6e6; }
.spin { display: flex; flex-direction: column; align-items: center; justify-content: space-around; width: 27px; border-right: 1px solid #5a5a5a; }
.weight input { width: 66px; padding-left: 6px; background: #3a3a3a; font-size: 15px; }
.weight button { border-left: 1px solid #5a5a5a; }
.uniform { display: flex; align-items: center; gap: 7px; width: 134px; padding-left: 8px; background: #e2e2e2; color: #111; }
.uniform i { width: 59px; height: 4px; background: #000; }
.ctl-right { display: flex; align-items: center; margin-left: auto; gap: 16px; }
.ctl-right svg + svg + svg { margin-left: -6px; }
.ctl-right svg.listicon { margin-left: 12px; }
.dim { color: #707070; }

.ai-main { flex: 1; min-height: 0; display: grid; grid-template-columns: 111px minmax(0, 1fr) 371px; grid-template-rows: minmax(0, 1fr); }
.strip { height: 17px; display: flex; align-items: center; flex: none; }
.strip.right { justify-content: flex-end; }
.ai .strip { background: #383838; padding: 0 10px; border-bottom: 1px solid #2e2e2e; }
.grip { background: repeating-linear-gradient(90deg, #333 0 1px, transparent 1px 3px); flex: none; }
.ai-tools { border-right: 3px solid #2c2c2c; border-left: 1px solid #363636; color: #c2c2c2; }
.ai-tools .grip { width: 28px; height: 7px; margin: 5px 0 14px 38px; }
.tg { display: grid; grid-template-columns: 45px 45px; margin: 0 0 8px 9px; position: relative; }
.tg::after { content: ""; position: absolute; left: 0; right: 7px; bottom: -4px; height: 1px; background: #3b3b3b; }
.tg button { height: 36px; position: relative; }
.tg svg { width: 30px; height: 30px; overflow: visible; }
.tg .on { background: #2a2a2a content-box; padding: 2px 1px; }
.more::after { content: ""; position: absolute; right: 3px; bottom: 5px; border: solid transparent; border-width: 5px 0 0 5px; border-right: 0; width: 0; height: 0; background: linear-gradient(135deg, transparent 50%, #bbb 50%) border-box; }
.fillstroke { position: relative; height: 82px; margin: 4px 0 0 9px; }
.fill, .stroke, .fs-swap, .fs-def { position: absolute; }
.fill { left: 0; top: 0; width: 54px; height: 54px; background: #fff; border: 1px solid #222; }
.stroke { left: 27px; top: 27px; width: 54px; height: 54px; background: #000; border: 1px solid #222; outline: 1px solid #fff; outline-offset: -2px; display: grid; place-items: center; }
.stroke i { width: 26px; height: 26px; background: #474747; border: 1px solid #fff; }
.fs-swap { left: 66px; top: 3px; }
.fs-def { left: 2px; top: 64px; width: 10px; height: 10px; background: #fff; outline: 1px solid #222; box-shadow: 6px 6px 0 #111, 6px 6px 0 1px #999; }
.modes { display: flex; width: 88px; height: 30px; margin: 9px 0 0 9px; border: 1px solid #555; border-radius: 4px; }
.modes button { flex: 1; border-left: 1px solid #555; }
.modes .on { background: #2b2b2b; border-left: 0; }
.modes span { width: 20px; height: 20px; border: 2px solid #000; }
.modes .m-solid { border-width: 4px; background: #222; }
.m-grad { background: linear-gradient(90deg, #fff, #444); }
.m-none { background: linear-gradient(135deg, #fff 42%, #f00 42% 58%, #fff 58%); }
.draw { height: 28px; margin-top: 7px; }
.screenbtn { width: 107px; margin-top: 12px; }

.ai-doc { display: flex; flex-direction: column; min-width: 0; border-right: 1px solid #333; }
.doctabs { display: flex; flex: none; }
.doctab { display: flex; align-items: center; font-weight: 600; color: #f0f0f0; white-space: nowrap; }
.ai .doctabs { height: 44px; background: #383838; border-bottom: 1px solid #333; }
.ai .doctab { background: #474747; padding: 0 15px; gap: 24px; font-size: 16px; }
.ai .doctab button { font-size: 15px; }
.ai-view { flex: 1; display: flex; min-height: 0; }
.ai-canvas { flex: 1; background: #535353; }
.ai-scroll { width: 24px; background: #434343; display: flex; flex-direction: column; align-items: center; justify-content: space-between; padding: 8px 0; color: #aaa; }
.ai-scroll span { width: 23px; height: 38px; background: #5c5c5c; border-radius: 12px; }
.ai-status { display: flex; height: 25px; flex: none; padding: 5px 0 0 8px; color: #e6e6e6; overflow: hidden; }
.ai-status input { background: #3a3a3a; padding-left: 3px; flex: none; }
.zoom { width: 75px; }
.page { width: 60px; }
.dd { width: 27px; background: #3e3e3e; border-left: 1px solid #555; flex: none; }
.nav { display: flex; align-items: center; justify-content: center; gap: 14px; width: 62px; flex: none; }
.seltext { flex: 1; border-left: 1px solid #404040; padding-left: 120px; color: #c8c8c8; overflow: hidden; }

.ai-panels { display: flex; flex-direction: column; min-width: 0; border-left: 2px solid #2c2c2c; }
.tabs { display: flex; align-items: stretch; flex: none; font-weight: 600; }
.tabs .pm { margin-left: auto; align-self: center; }
.ai .tabs { height: 41px; background: #383838; color: #9c9c9c; font-weight: 700; padding-right: 9px; border-top: 1px solid #2c2c2c; }
.ai .tabs button { padding: 0 13px; border-right: 1px solid #333; }
.ai .tabs .on { background: #474747; color: #fff; }
.ai .tabs .ud { gap: 8px; padding-left: 7px; }
.ai .tabs .cut { width: 59px; padding: 0 0 0 12px; overflow: hidden; justify-content: flex-start; }
.layers { height: 365px; display: flex; flex-direction: column; border-bottom: 4px solid #2c2c2c; flex: none; }
.layerlist { flex: 1; margin: 9px 7px 0 8px; border: 1px solid #525252; }
.layer { display: flex; align-items: center; height: 31px; background: #485f74; color: #ececec; position: relative; }
.layer::after { content: ""; position: absolute; right: 0; top: 0; border: solid transparent; border-width: 0 9px 9px 0; border-right-color: #ccc; }
.layer > span { border-color: #3e5365; }
.c-eye { width: 32px; height: 31px; display: grid; place-items: center; border-right: 1px solid; color: #c3ccd4; }
.c-lock { width: 32px; }
.c-bar { width: 5px; height: 28px; background: #4e80ff; }
.layer > .thumb { width: 27px; height: 27px; margin-left: 39px; background: #fff; border: 1px solid #000; }
.lname { flex: 1; padding-left: 8px; }
.c-ring { width: 54px; height: 31px; border-left: 1px solid; padding: 9px; }
.c-ring i { display: block; width: 12px; height: 12px; border: 2px solid #c3ccd4; border-radius: 50%; }
.layerfoot { display: flex; align-items: center; gap: 19px; height: 30px; padding: 0 42px 0 8px; }
.layerfoot span { flex: 1; font-size: 15px; }
.transform { flex: 1; display: flex; flex-direction: column; border-bottom: 3px solid #2c2c2c; }
.tf { display: flex; height: 127px; margin: 0 8px; padding-top: 9px; border-bottom: 1px solid #3d3d3d; flex: none; }
.ref { margin: 20px 11px 0 0; }
.fields { display: grid; grid-template-columns: 31px 87px 23px 87px; grid-auto-rows: 31px; gap: 8px 5px; margin: 0 7px 0 -7px; color: #757575; }
.fields label { display: flex; align-items: center; justify-content: flex-end; gap: 2px; }
.fields label svg { color: #a5a5a5; }
.fields input, .fields select { background: #4e4e4e; padding-left: 7px; color: #757575; }
.fields .sel svg { color: #666; }
.link { width: 36px; height: 36px; margin-top: 16px; background: #2a2a2a; border-radius: 3px; }
.shapeprops { flex: 1; display: grid; place-items: center; color: #6e6e6e; margin: 0 8px; border-bottom: 1px solid #3d3d3d; }
.checks { display: grid; gap: 10px; padding: 10px 9px; color: #6e6e6e; }
.checks label { display: flex; align-items: center; gap: 7px; height: 20px; }
.checks input { appearance: none; width: 18px; height: 18px; border: 1px solid #6e6e6e; border-radius: 2px; }
.ai .tabs.bottom { height: 45px; border-bottom: 2px solid #333; }

/* Photoshop */
.ps { background: #323232; color: #9a9a9a; font-size: 11px; border: 1px solid #252525; padding: 0 4px 3px; }
.ps-top { display: flex; align-items: center; height: 32px; padding: 0 2px 0 7px; flex: none; border-bottom: 1px solid #262626; }
.ps .logo { width: 39px; padding-bottom: 2px; color: #7ba7d6; font: 700 19px/20px Lato, sans-serif; }
.ps-menu { display: flex; gap: 16px; font-size: 12px; color: #dedede; padding-bottom: 1px; }
.ps .winbtns button { width: 27px; height: 19px; border-color: #222; background: #363636; }
.ps .winbtns button:last-child { width: 47px; }
.ps-options { display: flex; align-items: center; height: 34px; flex: none; padding: 0 6px 0 4px; border-bottom: 1px solid #222; }
.ps-options .vgrip { height: 20px; margin-right: 10px; }
.ps-options > .br + svg { margin-left: 8px; }
.br { color: #dcdcdc; }
.ps hr { width: 1px; height: 22px; margin: 0 8px; border: 0; background: #252525; flex: none; }
.autosel { width: 24px; height: 25px; background: #1e1e1e; color: #dcdcdc; border-radius: 2px; }
.ps-options > hr:nth-of-type(1) { margin: 0 6px 0 9px; }
.group { width: 58px; height: 19px; margin-left: 9px; background: #272727; border: 1px solid #4c4c4c; color: #dedede; }
.group select { padding-left: 7px; }
.ps .sel svg { right: 4px; color: #9a9a9a; }
.box { margin: 0 4px; }
.icons { display: flex; color: #858585; }
.icons + .icons { margin-left: 8px; }
.icons svg { width: 26px; height: 14px; }
.icons.three svg { height: 16px; }
.mode { width: 56px; margin-left: 2px; white-space: nowrap; font-size: 10px; color: #777; }
.opt-right { display: flex; align-items: center; margin-left: auto; }
.opt-right svg:last-child { margin-left: 11px; }

.ps-main { flex: 1; min-height: 0; display: grid; grid-template-columns: 40px minmax(0, 1fr) 40px 263px; grid-template-rows: minmax(0, 1fr); }
.ps .strip { height: 12px; background: #282828; padding: 0 6px; }
.ps-tools { border-right: 4px solid #272727; color: #d0d0d0; padding-left: 1px; }
.ps-tools .grip { width: 18px; height: 4px; margin: 4px 0 8px 8px; }
.ps-tools > button { width: 33px; height: 26px; position: relative; }
.ps-tools > button svg { width: 20px; height: 20px; }
.ps-tools .sm svg { width: 18px; height: 18px; }
.ps-tools > .on { background: #1e1e1e; }
.ps .more::after { right: 1px; bottom: 3px; border-width: 3px 0 0 3px; }
.ps-defs { display: flex; gap: 8px; padding: 6px 0 5px 2px; }
.ps-fb { position: relative; height: 34px; margin-left: 2px; }
.ps-fb span { position: absolute; width: 20px; height: 20px; border: 1px solid #1a1a1a; background: #fff; }
.ps-fb .bg { left: 10px; top: 10px; }
.ps-fb .fg { left: 0; top: 0; background: #fbf7d9; outline: 1px solid #ddd; outline-offset: -2px; }
.ps-tools > .qm svg { width: 18px; height: 14px; }
.ps-doc { display: flex; flex-direction: column; min-width: 0; min-height: 0; background: #282828; }
.ps .doctabs { height: 28px; border-bottom: 1px solid #222; }
.ps .doctab { background: #323232; padding: 0 10px; gap: 8px; }
.ps .doctab button { color: #9a9a9a; font-size: 13px; }
.ps-view { flex: 1; min-height: 0; display: grid; grid-template-columns: 17px minmax(0, 1fr) 19px; grid-template-rows: 18px minmax(0, 1fr); }
.corner { border: dotted #555; border-width: 0 1px 1px 0; margin: 0 3px 3px 0; }
.hr, .vr { overflow: hidden; font-size: 10px; line-height: 10px; color: #a8a8a8; }
#hruler { width: 600px; height: 18px; display: grid; grid-template-columns: repeat(18, 1fr); }
#hruler span { padding: 5px 0 0 4px; border-left: 1px solid #777; background: linear-gradient(90deg, #777 1px, transparent 1px) 0 100% / 20% 3px repeat-x; }
#vruler { height: 1000px; margin-top: -10px; display: grid; grid-template-rows: repeat(30, 1fr); }
#vruler span { width: 17px; padding: 3px 8px 0 4px; border-top: 1px solid #777; line-height: 9px; word-break: break-all; overflow: hidden; background: linear-gradient(#777 1px, transparent 1px) 100% 0 / 4px 20% repeat-y; }
#vruler .long { font-size: 8px; line-height: 7px; padding-right: 8px; }
.ps-canvas { background: #191919; border-top: 1px solid #000; padding-top: 89px; min-height: 0; overflow: hidden; }
.artboard { background: #fff; height: 720px; }
.ps-scroll { grid-column: 3; grid-row: 1 / 3; display: flex; flex-direction: column; align-items: center; justify-content: space-between; padding: 7px 3px 6px 0; border-right: 3px solid #222; }
.ps-scroll span { width: 12px; height: 344px; background: #484848; }
.ps-status { display: flex; align-items: center; height: 21px; flex: none; padding-left: 7px; background: #323232; color: #c4c4c4; font-size: 10px; }
.pz { width: 83px; color: #e6e6e6; }
.pd { width: 131px; }
.hscroll { flex: 1; display: flex; align-items: center; justify-content: space-between; padding: 0 24px 0 14px; color: #888; }
.hscroll span { width: 84px; height: 12px; margin-right: 106px; background: #484848; }
.ps-icons { border-right: 3px solid #242424; }
.ps-icons .grip { width: 18px; height: 4px; margin: 4px 0 4px 9px; }
.ps-icons button { width: 37px; height: 31px; border-bottom: 1px solid #222; color: #dcdcdc; }
.ps-panels { display: flex; flex-direction: column; min-width: 0; }
.ps .tabs { height: 28px; background: #282828; color: #8c8c8c; font-size: 10px; padding-right: 6px; border-top: 1px solid #222; }
.ps .tabs button { padding: 0 9px; border-right: 1px solid #222; }
.ps .tabs .on { background: #323232; color: #f0f0f0; }
.swpanel { height: 460px; display: flex; flex-direction: column; flex: none; border-bottom: 3px solid #262626; }
.recent { display: flex; gap: 1px; padding: 10px 0 5px 6px; border-bottom: 1px solid #262626; }
.recent span { width: 15px; height: 15px; }
.swarea { flex: 1; background: #2b2b2b; }
.swatches { display: grid; grid-template-columns: repeat(13, 17px); grid-auto-rows: 17px; gap: 1px; }
.foot { display: flex; align-items: center; justify-content: flex-end; gap: 18px; height: 24px; padding-right: 28px; border-top: 1px solid #262626; flex: none; }
.libs { flex: 1; display: flex; flex-direction: column; min-height: 0; }
.librow { display: flex; align-items: center; height: 34px; padding: 0 13px 0 8px; color: #dcdcdc; }
.librow .sel { flex: 1; margin-right: 9px; height: 17px; border: 1px solid #4c4c4c; background: #272727; font-weight: 600; }
.librow .sel select { padding-left: 10px; }
.librow button { width: 22px; height: 22px; margin-right: 2px; }
.librow .on { background: #1c1c1c; border-radius: 2px; }
.libsearch { display: flex; align-items: center; gap: 10px; height: 22px; margin: 0 8px; padding-right: 4px; border-bottom: 1px solid #555; }
.libsearch input { flex: 1; }
.libsearch input::placeholder { color: #707070; }
.libarea { flex: 1; margin-top: 7px; padding: 11px 10px; background: #2d2d2d; border-top: 1px solid #242424; border-right: 16px solid #292929; }
.libarea h3 { display: flex; align-items: center; gap: 5px; margin: 0 0 4px; font-size: 11px; line-height: 16px; font-weight: 400; color: #b0b0b0; }
.libcolors { display: flex; gap: 1px; }
.libcolors span { width: 68px; height: 44px; border: 1px solid #1c1c1c; }
.orange { background: #f04e23; }
.pink { background: #ec008c; }
.foot.lib { height: 32px; justify-content: flex-start; gap: 14px; padding: 0 19px 0 10px; }
.foot .cc { margin-left: auto; }

/* Taskbar */
.taskbar { height: 47px; flex: none; display: flex; color: #fff; background: #1c2022; }
.sys { width: 54px; }
.task { width: 57px; border-bottom: 3px solid transparent; padding-top: 3px; }
.task:nth-child(4) { margin-left: 3px; }
.run { background: linear-gradient(#91a3ad, #91a3ad) center bottom / 43px 3px no-repeat border-box; }
.active { background: #343c41; border-bottom-color: #91a3ad; }
.tile { width: 20px; height: 20px; border: 1px solid; font-size: 12px; line-height: 17px; font-weight: 600; }
.blue { color: #00c8ff; background: #001e2b; }
.org { color: #ff7c00; background: #2b1100; }
.tray { display: flex; align-items: center; gap: 16px; margin-left: auto; }
.tray time { width: 46px; font-size: 16px; }
.tray time + svg { margin-left: 7px; }
.tray i { width: 6px; height: 100%; margin-left: 16px; border-left: 1px solid #555; }
```

FILE: app.js
```js
const palette = [
  'ff0000 ffff20 00ff20 00ffff 1010ff ff10ff ffffff ebebeb e1e1e1 d7d7d7 cccccc c1c1c1 b7b7b7',
  'acacac a0a0a0 959595 ee1c25 fff200 00a550 00aeef 2e3192 ec008c 898989 7d7d7d 707070 626262',
  '555555 464646 363636 262626 111111 000000 f7977a f9ad81 fdc68a fff79a c4df9b a2d39c 82ca9d',
  '7bcdc8 6ecff6 7ea7d8 8493ca 8882be a187be bc8dbf f49ac2 f6989d f26c4f f68e55 fbaf5c fff467',
  'acd372 7cc576 3bb878 1abbb4 00bff3 438cca 5574b9 605ca8 855fa8 a763a8 f06ea9 f26d7d ee1c25',
  'f26522 f7941d fff200 8dc73f 39b54a 00a651 00a99d 00aeef 0072bc 0054a6 2e3192 662d91 92278f',
  'ec008c ed145b 9e0b0f a0410d a36209 aba000 598527 1a7b30 007236 00746b 0076a3 004b80 003471',
  '1b1464 440e62 630460 9e005d 9e0039 790000 7b2e00 7d4900 827b00 406618 005e20 005826 005952',
  '005b7f 003663 002157 0d004c 32004b 4b0049 7b0046 7a0026 c7b299 998675 736357 534741 37302d',
  'c69c6d a67c52 8c6239 754c24 603913 fbb034 8ed617 72b314 f04923'
].join(' ').split(' ');
const recent = 'fbf7d9 0a55a0 000000 ffffff ffffff 000000 f04923 ffffff 000000 0d0d0d f04923 000000 f04923 f04923 ff10ff'.split(' ');

function paint(id, colors) {
  const box = document.getElementById(id);
  for (const c of colors) {
    const s = document.createElement('span');
    s.style.background = '#' + c;
    box.append(s);
  }
}

function ruler(id, labels) {
  const box = document.getElementById(id);
  for (const n of labels) {
    const s = document.createElement('span');
    s.textContent = n;
    if (String(n).length > 3) s.className = 'long';
    box.append(s);
  }
}

paint('swatches', palette);
paint('recent', recent);
ruler('hruler', Array.from({ length: 17 }, (_, i) => i * 50).concat(''));
ruler('vruler', [150, 100, 50].concat(Array.from({ length: 25 }, (_, i) => i * 50)));
```
